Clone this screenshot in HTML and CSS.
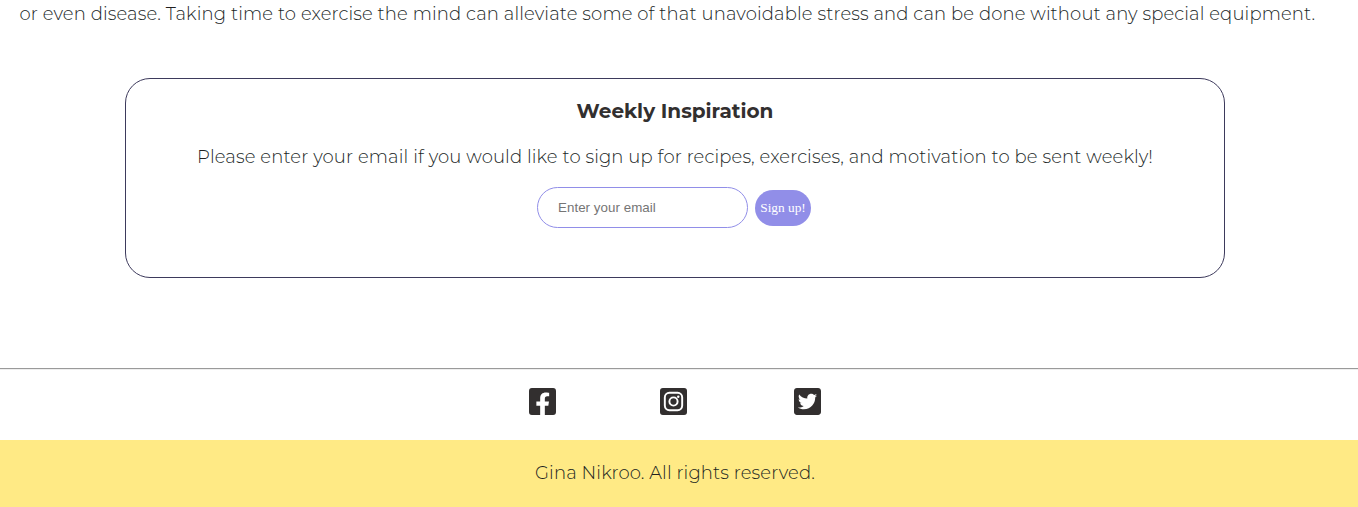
FILE: index.html
```html
<!DOCTYPE html>
<html lang="en">
<head>
<meta charset="utf-8">
<title>Weekly Inspiration</title>
<link rel="stylesheet" href="styles.css">
</head>
<body>
<main>
  <p class="article">or even disease. Taking time to exercise the mind can alleviate some of that unavoidable stress and can be done without any special equipment.</p>
  <section class="signup">
    <h2 class="signup-title">Weekly Inspiration</h2>
    <p class="signup-text">Please enter your email if you would like to sign up for recipes, exercises, and motivation to be sent weekly!</p>
    <form class="signup-form">
      <input class="email" type="email" placeholder="Enter your email">
      <button class="submit" type="button">Sign up!</button>
    </form>
  </section>
</main>
<footer>
  <hr class="divider">
  <div class="social">
    <svg class="icon" viewBox="0 32 448 448"><path d="M400 32H48A48 48 0 0 0 0 80v352a48 48 0 0 0 48 48h137.25V327.69h-63V256h63v-54.64c0-62.15 37-96.48 93.67-96.48 27.14 0 55.52 4.84 55.52 4.84v61h-31.27c-30.81 0-40.42 19.12-40.42 38.73V256h68.78l-11 71.69h-57.78V480H400a48 48 0 0 0 48-48V80a48 48 0 0 0-48-48z"/></svg>
    <svg class="icon instagram" viewBox="0 32 448 448"><rect y="32" width="448" height="448" rx="48"/><g class="camera"><rect x="80" y="112" width="288" height="288" rx="76"/><circle cx="224" cy="256" r="68"/></g><circle class="flash" cx="303" cy="177" r="20"/></svg>
    <svg class="icon twitter" viewBox="0 32 448 448"><path d="M400 32H48C21.5 32 0 53.5 0 80v352c0 26.5 21.5 48 48 48h352c26.5 0 48-21.5 48-48V80c0-26.5-21.5-48-48-48zm-48.9 158.8c.2 2.8.2 5.7.2 8.5 0 86.7-66 186.6-186.6 186.6-37.2 0-71.7-10.8-100.7-29.4 5.3.6 10.4.8 15.8.8 30.7 0 58.9-10.4 81.4-28-28.8-.6-53-19.5-61.3-45.5 10.1 1.5 19.2 1.5 29.6-1.2-30-6.1-52.5-32.5-52.5-64.4v-.8c8.7 4.9 18.9 7.9 29.6 8.3a65.447 65.447 0 0 1-29.2-54.6c0-12.2 3.2-23.4 8.9-33.1 32.3 39.8 80.8 65.8 135.2 68.6-9.3-44.5 24-80.6 64-80.6 18.9 0 35.9 7.9 47.9 20.7 14.8-2.8 29-8.3 41.6-15.8-4.9 15.2-15.2 28-28.8 36.1 13.2-1.4 26-5.1 37.8-10.2-8.9 13.1-20.1 24.7-32.9 34z"/></svg>
  </div>
  <p class="copyright">Gina Nikroo. All rights reserved.</p>
</footer>
</body>
</html>
```
FILE: styles.css
```css
* { box-sizing: border-box; }
html, body { overflow: hidden; }
body {
  margin: 0;
  background: #fff;
  color: #322f2f;
  font-family: Montserrat, Inter, "Open Sans", sans-serif;
  font-size: 18px;
  font-weight: 300;
  line-height: 22px;
}
.article, .signup-text, .copyright {
  color: #211f1f;
  letter-spacing: 0.123px;
  white-space: nowrap;
}
.article {
  margin: 0 0 0 19.5px;
  padding-top: 3px;
  height: 78px;
}
.signup {
  width: 1100px;
  height: 200px;
  margin-left: 125px;
  padding-top: 20px;
  border: 1px solid #3d3a5c;
  border-radius: 25px;
  text-align: center;
}
.signup-title {
  margin: 0 0 23px;
  font-size: 20px;
  font-weight: 700;
  line-height: 24px;
}
.signup-text { margin: 0 0 19px; }
.signup-form {
  display: flex;
  align-items: center;
  justify-content: center;
  gap: 7px;
  padding-right: 2px;
}
.email {
  width: 211px;
  height: 41px;
  padding: 0 20px;
  border: 1px solid #918ee8;
  border-radius: 21px;
  background: #fff;
  font: 13.333px "Liberation Sans", Arial, sans-serif;
  letter-spacing: 0.05px;
}
.email::placeholder { color: #757575; }
.submit {
  width: 56px;
  height: 36px;
  padding: 0;
  border: 0;
  border-radius: 18px;
  background: #918ee8;
  color: #fff;
  font: 13.333px "Liberation Serif", "Times New Roman", serif;
}
.divider {
  margin: 90px 0 18px;
  border: 0 solid #9a9a9a;
  border-top-width: 1px;
  border-bottom: 1px solid #eee;
}
.social {
  display: flex;
  height: 52px;
  padding-left: 529px;
}
.icon { width: 27px; height: 27px; fill: #322f2f; }
.instagram { margin-left: 104px; }
.twitter { margin-left: 107px; }
.camera { fill: none; stroke: #fff; stroke-width: 32; }
.flash { fill: #fff; }
.copyright {
  height: 67px;
  margin: 0;
  padding: 22px 8px 0 0;
  background: #ffea85;
  text-align: center;
}
```
